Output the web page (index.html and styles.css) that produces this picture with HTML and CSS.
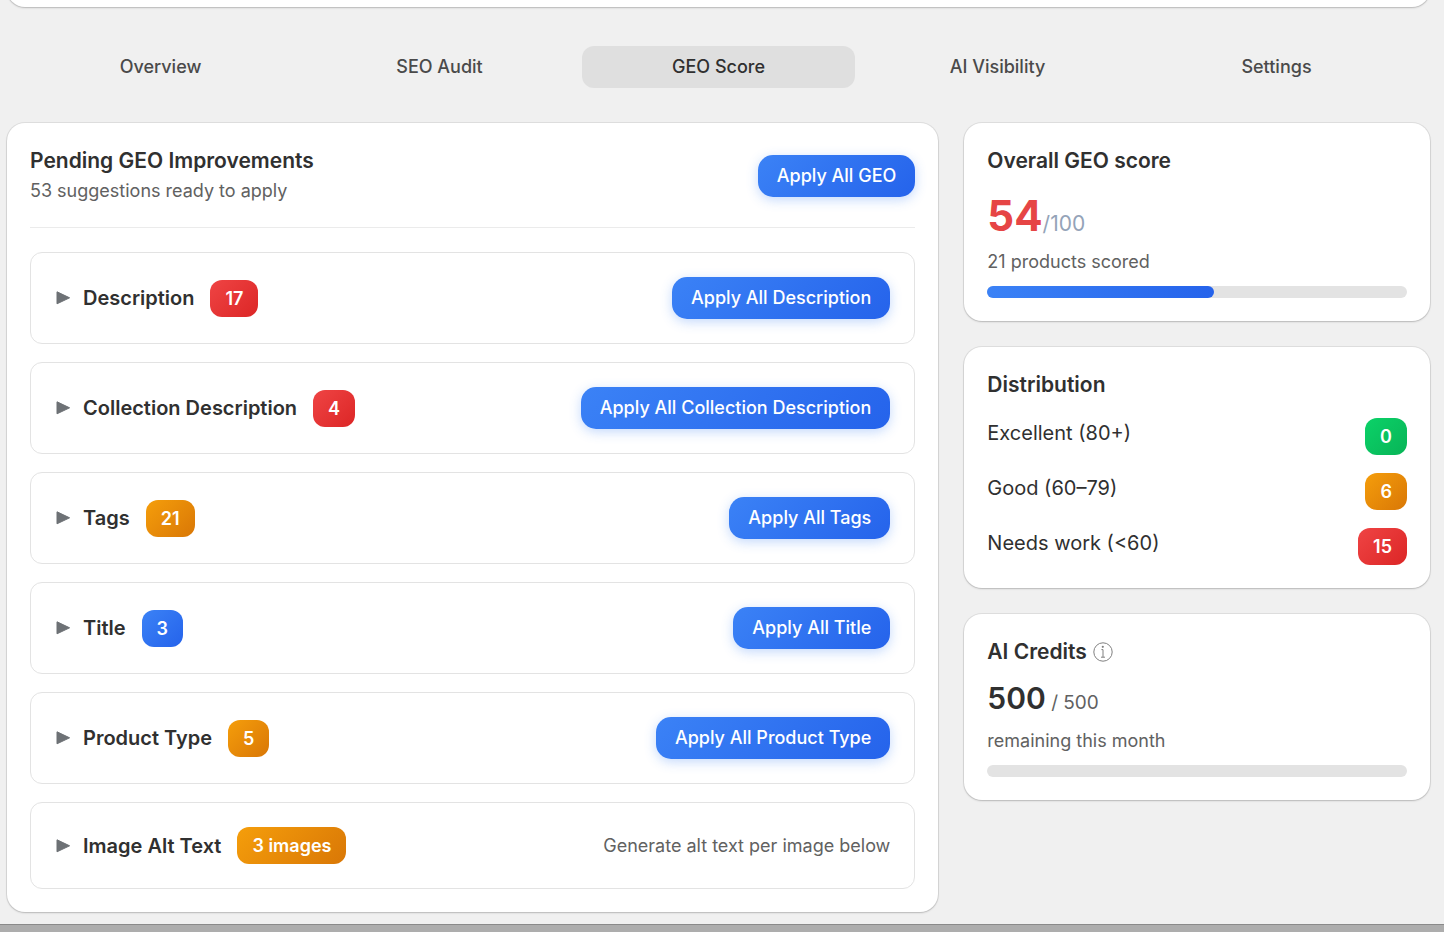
FILE: index.html
```html
<!DOCTYPE html>
<html lang="en">

  <head>
    <meta charset="utf-8">
    <title>GEO Score</title>
    <link rel="stylesheet" href="styles.css">
  </head>

  <body>

    <div class="page">

      <div class="card top-card"></div>

      <nav class="tabs">
        <button class="tab">Overview</button>
        <button class="tab">SEO Audit</button>
        <button class="tab active">GEO Score</button>
        <button class="tab">AI Visibility</button>
        <button class="tab">Settings</button>
      </nav>

      <main class="layout">

        <!-- PENDING IMPROVEMENTS -->
        <section class="card">

          <div class="card-header">
            <div>
              <h2>Pending GEO Improvements</h2>
              <p class="subdued">53 suggestions ready to apply</p>
            </div>
            <button class="apply">Apply All GEO</button>
          </div>

          <div class="groups">

            <div class="group">
              <button class="toggle">
                <svg class="arrow" viewBox="0 0 16 16"><path d="M2 1.8 L14.6 7.8 L2 13.8 Z"/></svg>
                Description
              </button>
              <span class="badge red">17</span>
              <button class="apply">Apply All Description</button>
            </div>

            <div class="group">
              <button class="toggle">
                <svg class="arrow" viewBox="0 0 16 16"><path d="M2 1.8 L14.6 7.8 L2 13.8 Z"/></svg>
                Collection Description
              </button>
              <span class="badge red">4</span>
              <button class="apply">Apply All Collection Description</button>
            </div>

            <div class="group">
              <button class="toggle">
                <svg class="arrow" viewBox="0 0 16 16"><path d="M2 1.8 L14.6 7.8 L2 13.8 Z"/></svg>
                Tags
              </button>
              <span class="badge orange">21</span>
              <button class="apply">Apply All Tags</button>
            </div>

            <div class="group">
              <button class="toggle">
                <svg class="arrow" viewBox="0 0 16 16"><path d="M2 1.8 L14.6 7.8 L2 13.8 Z"/></svg>
                Title
              </button>
              <span class="badge blue">3</span>
              <button class="apply">Apply All Title</button>
            </div>

            <div class="group">
              <button class="toggle">
                <svg class="arrow" viewBox="0 0 16 16"><path d="M2 1.8 L14.6 7.8 L2 13.8 Z"/></svg>
                Product Type
              </button>
              <span class="badge orange">5</span>
              <button class="apply">Apply All Product Type</button>
            </div>

            <div class="group">
              <button class="toggle">
                <svg class="arrow" viewBox="0 0 16 16"><path d="M2 1.8 L14.6 7.8 L2 13.8 Z"/></svg>
                Image Alt Text
              </button>
              <span class="badge orange">3 images</span>
              <span class="note subdued">Generate alt text per image below</span>
            </div>

          </div>

        </section>

        <!-- SIDEBAR -->
        <aside class="sidebar">

          <section class="card">
            <h2>Overall GEO score</h2>
            <p class="score"><strong>54</strong>/100</p>
            <p class="subdued">21 products scored</p>
            <div class="progress"><div class="progress-fill" style="width: 54%"></div></div>
          </section>

          <section class="card">
            <h2>Distribution</h2>
            <ul class="distribution">
              <li>Excellent (80+) <span class="badge green">0</span></li>
              <li>Good (60–79) <span class="badge orange">6</span></li>
              <li>Needs work (&lt;60) <span class="badge red">15</span></li>
            </ul>
          </section>

          <section class="card">
            <h2 class="with-icon">
              AI Credits
              <svg class="info" viewBox="0 0 20 20">
                <circle cx="10" cy="10" r="9.2"/>
                <path d="M8.4 7.6 H10 V15.2 M8 15.2 H12"/>
                <circle class="dot" cx="9.8" cy="4.8" r="1.1"/>
              </svg>
            </h2>
            <p class="credits"><strong>500</strong> / 500</p>
            <p class="subdued">remaining this month</p>
            <div class="progress"></div>
          </section>

        </aside>

      </main>

    </div>

    <footer class="bottom-bar"></footer>

  </body>

</html>
```
FILE: styles.css
```css
* {
  box-sizing: border-box;
}

body {
  margin: 0;
  background-color: #f0f0f0;
  color: #303030;
  font-family: Inter, "Liberation Sans", sans-serif;
  font-size: 18px;
  line-height: 28px;
}

h2, p, ul {
  margin: 0;
  padding: 0;
}

h2 {
  font-size: 21px;
  font-weight: 600;
  line-height: 28px;
}

button {
  border: none;
  background: none;
  padding: 0;
  color: inherit;
  font: inherit;
  cursor: pointer;
}

.page {
  display: flow-root;
  padding: 0 14px 12px 7px;
}

.card {
  background-color: white;
  border-radius: 18px;
  padding: 24px 23px 23px;
  box-shadow: 0 0 0 1px rgba(0, 0, 0, 0.07), 0 1px 2px rgba(0, 0, 0, 0.18);
}

/* Only the bottom edge of this card is on screen */
.top-card {
  margin-top: -40px;
}

/* Tabs */
.tabs {
  display: grid;
  grid-template-columns: repeat(5, 1fr);
  gap: 6px;
  padding: 39px 17px 35px;
}

.tab {
  height: 42px;
  border-radius: 12px;
  color: #4a4a4a;
  font-weight: 500;
}

.tab.active {
  background-color: #dfdfdf;
  color: #303030;
}

/* Columns */
.layout {
  display: grid;
  grid-template-columns: 2fr 1fr;
  gap: 26px;
  align-items: start;
}

.sidebar {
  display: grid;
  gap: 26px;
}

.card-header {
  display: flex;
  justify-content: space-between;
  align-items: center;
  padding-bottom: 22px;
  border-bottom: 1px solid #ebebeb;
  margin-bottom: 24px;
}

.subdued {
  color: #616161;
}

.card-header .subdued {
  margin-top: 2px;
}

/* Buttons and badges */
.apply {
  height: 42px;
  padding: 0 19px;
  border-radius: 15px;
  color: white;
  font-weight: 500;
  background: linear-gradient(135deg, #3b82f6, #2563eb);
  box-shadow: 0 3px 12px rgba(59, 130, 246, 0.3);
}

.badge {
  padding: 5px 15px;
  border-radius: 12px;
  color: white;
  font-size: 18px;
  font-weight: 600;
  line-height: 27px;
}

.red {
  background: linear-gradient(135deg, #ef4444, #dc2626);
}

.orange {
  background: linear-gradient(135deg, #f59e0b, #d97706);
}

.blue {
  background: linear-gradient(135deg, #3b82f6, #2563eb);
}

.green {
  background: linear-gradient(135deg, #0bd268, #08b457);
}

/* Suggestion groups */
.groups {
  display: grid;
  gap: 18px;
}

.group {
  display: flex;
  align-items: center;
  gap: 16px;
  padding: 24px;
  border: 1px solid #e3e3e3;
  border-radius: 12px;
}

.group .apply, .note {
  margin-left: auto;
}

.toggle {
  display: flex;
  align-items: center;
  gap: 12px;
  font-size: 20px;
  font-weight: 600;
}

.arrow {
  width: 16px;
  height: 16px;
  fill: #6d7175;
  stroke: #6d7175;
  stroke-width: 1;
  stroke-linejoin: round;
}

/* Sidebar cards */
.score {
  margin: 15px 0 6px;
  color: #94a3b8;
  font-size: 21px;
}

.score strong {
  color: #e64545;
  font-size: 42px;
  font-weight: 700;
  line-height: 52px;
}

.progress {
  height: 12px;
  margin-top: 10px;
  border-radius: 6px;
  background-color: #e3e3e3;
  overflow: hidden;
}

.progress-fill {
  height: 100%;
  border-radius: 0 6px 6px 0;
  background: linear-gradient(90deg, #3b82f6, #2563eb);
}

.distribution {
  display: grid;
  gap: 18px;
  margin-top: 19px;
  list-style: none;
  font-size: 20px;
  line-height: 30px;
}

.distribution li {
  display: flex;
  justify-content: space-between;
  align-items: flex-start;
}

.with-icon {
  display: flex;
  align-items: center;
  gap: 6px;
}

.info {
  width: 20px;
  height: 20px;
  fill: none;
  stroke: #808080;
  stroke-width: 1;
}

.info .dot {
  fill: #808080;
  stroke: none;
}

.credits {
  margin: 12px 0 9px;
  color: #616161;
  font-size: 19px;
}

.credits strong {
  color: #303030;
  font-size: 30px;
  font-weight: 600;
  line-height: 40px;
}

.bottom-bar {
  height: 8px;
  border-top: 1px solid #8a8a8a;
  background-color: #adadad;
}
```
